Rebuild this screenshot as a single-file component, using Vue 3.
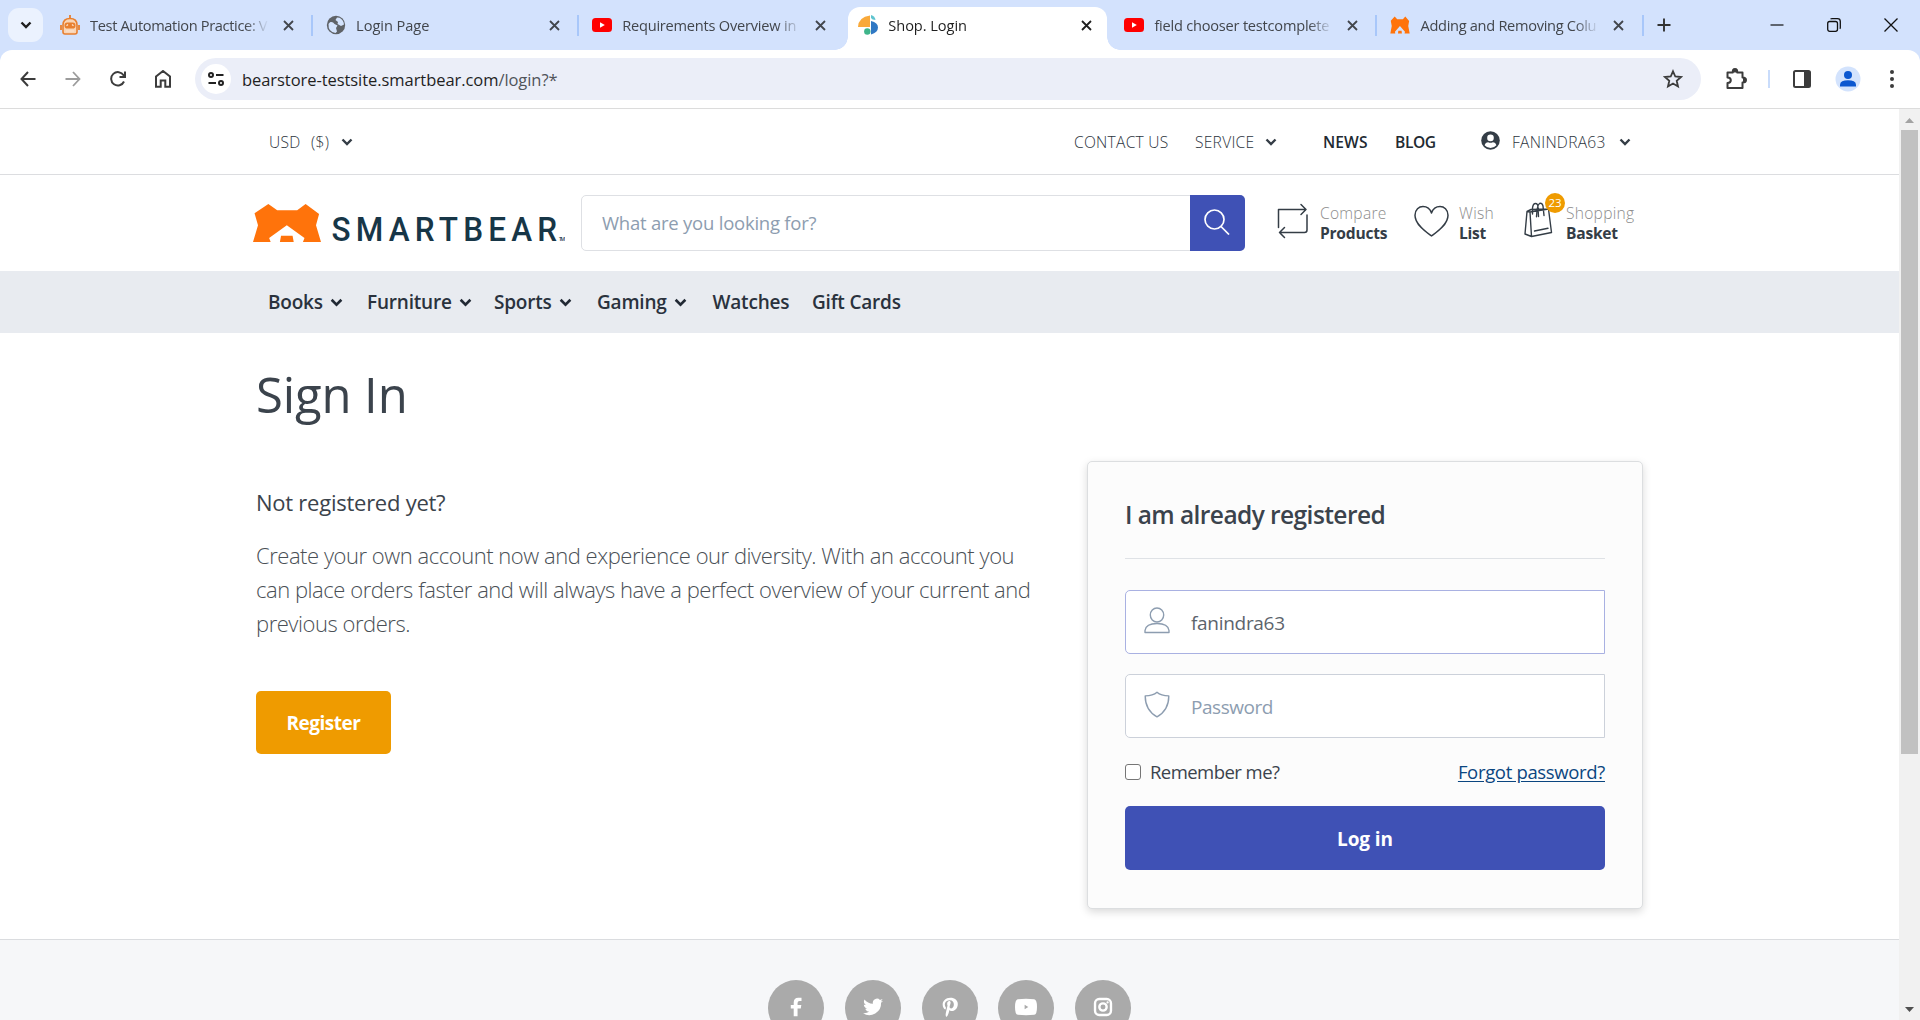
<script setup>
const tabs = [
  { icon: 'robot', title: 'Test Automation Practice: V', cls: 't1' },
  { icon: 'globe', title: 'Login Page', cls: 't2' },
  { icon: 'yt', title: 'Requirements Overview in', cls: 't3', noSep: true },
  { icon: 'shop', title: 'Shop. Login', cls: 't4', active: true, noSep: true },
  { icon: 'yt', title: 'field chooser testcomplete', cls: 't5' },
  { icon: 'bear', title: 'Adding and Removing Colu', cls: 't6' },
]
const nav = [
  { label: 'Books', drop: true, w: 99 },
  { label: 'Furniture', drop: true, w: 127 },
  { label: 'Sports', drop: true, w: 103 },
  { label: 'Gaming', drop: true, w: 115.5 },
  { label: 'Watches', w: 99.5 },
  { label: 'Gift Cards', w: 100 },
]
const bear = 'M75 282L98 301H150L172 282L207 312L199 346L212 396H165L169 384L123 346L77 384L81 396H35L48 346L39 310ZM108 377H138L141 396H105Z'
</script>

<template>
  <div class="window">
    <header class="tabstrip">
      <button class="tab-search">
        <svg width="12" height="8" viewBox="0 0 12 8"><path d="M1.5 1.5L6 6L10.5 1.5" fill="none" stroke="#1f1f1f" stroke-width="2.4" /></svg>
      </button>
      <div v-for="(t, i) in tabs" :key="i" class="tab" :class="[t.cls, { active: t.active, sep: !t.noSep }]">
        <svg v-if="t.icon === 'robot'" class="fav" viewBox="0 0 20 20">
          <path d="M10 0V4M1 10V15M19 10V15" stroke="#e87f2f" stroke-width="1.8" fill="none" />
          <path d="M3 17V10Q3 3.500 10 3.500T17 10V17Q17 19 15 19H5Q3 19 3 17Z" fill="#f9d5b6" stroke="#e87f2f" stroke-width="1.600" />
          <rect x="4.500" y="7.500" width="11" height="6" rx="2.800" fill="#e87f2f" />
          <path d="M6.500 10.800L8 9.500M12 9.500L13.500 10.800M6 16H14" stroke="#fbe3cf" stroke-width="1.200" />
        </svg>
        <svg v-else-if="t.icon === 'globe'" class="fav globe" viewBox="0 0 20 20">
          <circle cx="10" cy="10" r="9.200" fill="#5f6368" />
          <path d="M2.500 9C4 6 7 6.500 8.500 9L11.500 10.500L10 13L11 16.500L9.500 18Q2 17 2.500 9ZM11 2.500L9.500 5L12 7L11.500 9L15 11L18 9.500Q17.500 5 13.500 2.800Z" fill="#d3e3fd" />
        </svg>
        <svg v-else-if="t.icon === 'yt'" class="fav" viewBox="0 0 20 20">
          <rect y="3" width="20" height="14" rx="3.500" fill="#f00" /><path d="M8 7.300L12.800 10L8 12.700Z" fill="#fff" />
        </svg>
        <svg v-else-if="t.icon === 'shop'" class="fav" viewBox="0 0 20 20">
          <path d="M12 .500V12H0Q.500 2 12 .500Z" fill="#f9a93a" /><path d="M13 6Q20 7.500 20 12.500T13 19.500Z" fill="#2f78c4" />
          <path d="M13 0Q17 1 17.500 5Q14 5 13 3Z" fill="#5fc4cf" /><circle cx="9.300" cy="16.500" r="3.200" fill="#3fb58a" />
        </svg>
        <svg v-else class="fav" viewBox="32 272 183 134" preserveAspectRatio="none"><path :d="bear" fill="#ff730b" /></svg>
        <span class="tab-title">{{ t.title }}</span>
        <svg class="tab-close" width="11" height="11" viewBox="0 0 11 11"><path d="M1 1L10 10M10 1L1 10" stroke="currentColor" stroke-width="1.800" /></svg>
      </div>
      <svg class="plus" width="14" height="14" viewBox="0 0 14 14"><path d="M7 .500V13.500M.500 7H13.500" stroke="#333" stroke-width="1.900" /></svg>
      <div class="win-buttons">
        <svg width="14" height="14" viewBox="0 0 14 14"><path d="M.500 7H13.500" stroke="#111" stroke-width="1.200" /></svg>
        <svg width="14" height="14" viewBox="0 0 14 14" fill="none" stroke="#111" stroke-width="1.300"><rect x=".7" y="3.500" width="9.800" height="9.800" rx="2" /><path d="M3.500 1Q4 .7 5 .7H10.500Q13.300 .7 13.300 3.500V9.500Q13.300 10.300 12.800 10.800" /></svg>
        <svg width="14" height="14" viewBox="0 0 14 14"><path d="M.500 .500L13.500 13.500M13.500 .500L.500 13.500" stroke="#111" stroke-width="1.300" /></svg>
      </div>
    </header>

    <div class="toolbar">
      <div class="tools-left">
        <svg width="16" height="16" viewBox="0 0 16 16" fill="none" stroke="#3c3c3c" stroke-width="2"><path d="M15.500 8H1.500M8 1L1.500 8L8 15" /></svg>
        <svg width="16" height="16" viewBox="0 0 16 16" fill="none" stroke="#9c9c9c" stroke-width="1.800"><path d="M.500 8H14.500M8 1L14.500 8L8 15" /></svg>
        <svg width="16" height="16" viewBox="0 0 16 16" fill="none" stroke="#3c3c3c" stroke-width="2"><path d="M14 10.500A6.700 6.700 0 1 1 13.600 4.300L15 6M15 .500V6H9.500" /></svg>
        <svg width="16" height="18" viewBox="0 0 16 18" fill="none" stroke="#3c3c3c" stroke-width="2"><path d="M1 6.500L8 1L15 6.500V16.800H10.300V10.500H5.700V16.800H1Z" /></svg>
      </div>
      <div class="address">
        <span class="site-info"><svg width="16" height="14" viewBox="0 0 16 14" fill="none" stroke="#222" stroke-width="2"><circle cx="3" cy="3" r="2" /><path d="M8 3H15.500M.500 11H8" /><circle cx="13" cy="11" r="2" /></svg></span>
        <span class="url">bearstore-testsite.smartbear.com<i>/login?*</i></span>
        <svg class="star" width="20" height="20" viewBox="0 0 20 20" fill="none" stroke="#3c3c3c" stroke-width="1.800"><path d="M10 2.300L12.300 7.500L18 8L13.700 11.800L15 17.500L10 14.500L5 17.500L6.300 11.800L2 8L7.700 7.500Z" /></svg>
      </div>
      <div class="tools-right">
        <svg width="22" height="22" viewBox="0 0 22 22"><path d="M2.500 4.500H7.800Q7.500 1 10 1T12.200 4.500H17.500V9.500Q21 9.500 21 12T17.500 14.500V20H2.500V15Q5.800 14.700 5.800 12.200T2.500 9.500Z" fill="none" stroke="#3c3c3c" stroke-width="2" stroke-linejoin="round" /><path d="M8 3.500Q8 1 10 1T12 3.500V4.500H8ZM18 9.500Q21 9.800 21 12T18 14.500Z" fill="#3c3c3c" /></svg>
        <i class="tool-sep"></i>
        <svg width="20" height="20" viewBox="0 0 20 20"><rect x="2" y="2" width="16" height="16" rx="1.500" fill="none" stroke="#3c3c3c" stroke-width="2" /><path d="M12 2H18V18H12Z" fill="#3c3c3c" /></svg>
        <svg width="26" height="26" viewBox="0 0 26 26"><circle cx="13" cy="13" r="12.500" fill="#d3e3fd" /><circle cx="13" cy="9" r="4" fill="#0b57d0" /><path d="M5 20.500V18.500Q5.500 14.300 13 14.300T21 18.500V20.500Z" fill="#0b57d0" /></svg>
        <svg width="6" height="20" viewBox="0 0 6 20" fill="#3c3c3c"><circle cx="3" cy="3" r="2" /><circle cx="3" cy="10" r="2" /><circle cx="3" cy="17" r="2" /></svg>
      </div>
    </div>

    <div class="viewport">
      <div class="page">
        <div class="topbar">
          <span class="usd">USD</span><span class="dollar">($)</span>
          <svg class="chev" viewBox="0 0 12 8"><path d="M1.500 1.500L6 6L10.500 1.500" /></svg>
          <span class="contact">CONTACT US</span>
          <span class="service">SERVICE</span>
          <svg class="chev" viewBox="0 0 12 8"><path d="M1.500 1.500L6 6L10.500 1.500" /></svg>
          <span class="news">NEWS</span>
          <span class="blog">BLOG</span>
          <svg class="user" width="19" height="19" viewBox="0 0 19 19"><circle cx="9.500" cy="9.500" r="9.300" fill="#343d46" /><circle cx="9.500" cy="6.900" r="3.300" fill="#fff" /><path d="M3.600 14.300Q4.500 11.300 7.200 11.300Q9.500 12.300 11.800 11.300Q14.500 11.300 15.400 14.300Q13 17 9.500 17T3.600 14.300Z" fill="#fff" /></svg>
          <span class="account">FANINDRA63</span>
          <svg class="chev" viewBox="0 0 12 8"><path d="M1.500 1.500L6 6L10.500 1.500" /></svg>
        </div>

        <div class="shopbar">
          <svg class="logo" width="312" height="48" viewBox="0 0 312 48">
            <svg x="0" y="0" width="68" height="38" viewBox="35 282 177 114" preserveAspectRatio="none"><path :d="bear" fill="#ff730b" /></svg>
            <text class="brand" transform="translate(78.500 37) scale(.94 1)" textLength="240" lengthAdjust="spacing">SMARTBEAR</text>
            <text class="tm" x="306" y="37" textLength="6">TM</text>
          </svg>
          <div class="search">
            <span class="placeholder">What are you looking for?</span>
            <span class="search-btn"><svg width="26" height="26" viewBox="0 0 26 26" fill="none" stroke="#fff" stroke-width="1.700"><circle cx="10.500" cy="10.500" r="9.500" /><path d="M17 17.500L25 25.500" /></svg></span>
          </div>
          <div class="action compare">
            <svg width="32" height="36" viewBox="0 0 32 36" fill="none" stroke="#343d46" stroke-width="1.500" stroke-linecap="round" stroke-linejoin="round"><path d="M1.500 24.500V6.500H29M24 1.500L29 6.500L24 11.500M30 12V27Q30 29.500 27.500 29.500H2.500M7.500 24.500L2.500 29.500L7.500 34.500" /></svg>
            <p>Compare<b>Products</b></p>
          </div>
          <div class="action wish">
            <svg width="35" height="32" viewBox="0 0 35 32" fill="none" stroke="#343d46" stroke-width="1.500" stroke-linejoin="round"><path d="M17.500 31C12 27 1 19.500 1 10.200C1 4.500 5 1.500 9 1.500C13 1.500 16 3.700 17.500 8C19 3.700 22 1.500 26 1.500C30 1.500 34 4.500 34 10.200C34 19.500 23 27 17.500 31Z" /></svg>
            <p>Wish<b>List</b></p>
          </div>
          <div class="action basket">
            <svg width="29" height="36" viewBox="0 0 29 36" fill="none" stroke="#343d46" stroke-width="1.400" stroke-linejoin="round" stroke-linecap="round"><path d="M3 9.500L1 32L7.500 34.500L27.500 30.500L24.500 7L6 10L7.500 34.500M3 9.500L7 7.500L24.500 7M3 9.500L6 10M10.500 29L24 26.300M8.500 12V6Q9 1.500 11.500 1.500T14 5.500L14.500 14.500M12.500 14.800Q13 3 15.500 1.500Q18 .5 19 4L20 13.500" /></svg>
            <i class="badge">23</i>
            <p>Shopping<b>Basket</b></p>
          </div>
        </div>

        <nav class="nav">
          <span v-for="n in nav" :key="n.label" class="nav-item" :style="{ width: n.w + 'px' }">{{ n.label }}<svg v-if="n.drop" class="chev big" viewBox="0 0 12 8"><path d="M1.500 1.500L6 6L10.500 1.500" /></svg></span>
        </nav>

        <main class="content">
          <h1>Sign In</h1>
          <div class="columns">
            <section class="signup">
              <h2>Not registered yet?</h2>
              <p><span>Create your own account now and experience our diversity. With an account you</span> <span>can place orders faster and will always have a perfect overview of your current and</span> <span>previous orders.</span></p>
              <button class="register">Register</button>
            </section>
            <section class="card">
              <h3>I am already registered</h3>
              <div class="field focus">
                <svg width="26" height="27" viewBox="0 0 26 27" fill="none" stroke="#8d9db0" stroke-width="1.400" stroke-linejoin="round"><ellipse cx="13" cy="8" rx="6.700" ry="7" /><path d="M1 25.500V23.500Q2 16.500 13 16.500T25 23.500V25.500Z" /></svg>
                <span class="value">fanindra63</span>
              </div>
              <div class="field">
                <svg width="26" height="27" viewBox="0 0 26 27" fill="none" stroke="#8d9db0" stroke-width="1.400" stroke-linejoin="round"><path d="M13 1.200Q9 4.800 1.200 4.900C1.200 14 5.500 21.500 13 25.800C20.500 21.500 24.800 14 24.800 4.900Q17 4.800 13 1.200Z" /></svg>
                <span class="pw">Password</span>
              </div>
              <div class="row">
                <i class="check"></i><span class="remember">Remember me?</span><a class="forgot">Forgot password?</a>
              </div>
              <button class="login">Log in</button>
            </section>
          </div>
        </main>

        <footer class="footer">
          <span class="social"><svg viewBox="0 0 24 24"><path d="M9.500 22V13.500H6.300V9.800H9.500V7.200Q9.500 2 14.500 2H18V5.500H15.800Q13.700 5.500 13.700 7.500V9.800H17.800L17.200 13.500H13.700V22Z" /></svg></span>
          <span class="social"><svg viewBox="0 0 24 24"><path d="M23 5.100C22.200 5.500 21.300 5.700 20.400 5.800C21.400 5.300 22.100 4.400 22.400 3.300C21.500 3.800 20.600 4.200 19.600 4.400A4.500 4.500 0 0 0 11.900 8.500C8.200 8.300 4.900 6.500 2.700 3.800C1.500 5.800 2.100 8.400 4.100 9.800C3.400 9.800 2.700 9.600 2 9.200C2 11.300 3.500 13.200 5.600 13.700C5 13.900 4.300 13.900 3.600 13.800C4.200 15.600 5.800 16.900 7.800 16.900C5.900 18.400 3.600 19 1.100 18.700A12.800 12.800 0 0 0 20.800 7.300C21.700 6.700 22.400 6 23 5.100Z" /></svg></span>
          <span class="social"><svg viewBox="0 0 24 24"><path d="M12.400 2C7 2 4 5.700 4 9.500C4 11.500 5.100 13.900 6.700 14.600C7.200 14.800 7.200 14.500 7.600 12.900C7.600 12.600 7.500 12.500 7.300 12.200C5.300 9.500 6.500 4.700 11.800 4.700C17.700 4.700 17.200 13.500 13.300 13.500C12 13.500 11.300 12.500 11.600 11.400C12 9.900 12.700 8.300 12.700 7.200C12.700 4.500 8.900 4.900 8.900 8.500C8.900 9.600 9.300 10.300 9.300 10.300C7.100 20 6.800 20.100 8 23C10 21.500 11.200 16.800 11.300 15.200C11.700 15.900 12.800 16.400 13.900 16.400C17.800 16.400 20.500 12.800 20.500 8.700C20.500 4.800 17.300 2 12.400 2Z" /></svg></span>
          <span class="social"><svg viewBox="0 0 24 24"><path d="M3 3.500Q12 2.500 21 3.500Q24 4 24 12T21 20.500Q12 21.500 3 20.500Q0 20 0 12T3 3.500ZM10.500 9.500V14.500L14.500 12Z" /></svg></span>
          <span class="social"><svg class="outline" viewBox="0 0 24 24"><rect x="3.300" y="3.300" width="17.400" height="17.400" rx="4.500" /><circle cx="12" cy="12" r="4" /><circle cx="17" cy="7" r=".6" stroke-width="1.300" /></svg></span>
        </footer>
      </div>
      <div class="scrollbar">
        <svg width="9" height="5" viewBox="0 0 9 5"><path d="M0 5L4.500 0L9 5Z" fill="#a3a3a3" /></svg>
        <i class="thumb"></i>
        <svg width="9" height="5" viewBox="0 0 9 5"><path d="M0 0L4.500 5L9 0Z" fill="#505050" /></svg>
      </div>
    </div>
  </div>
</template>

<style>
body { margin: 0; overflow: hidden; }
</style>

<style scoped>
* { box-sizing: border-box; }
svg { display: block; flex: none; }
p, h1, h2, h3 { margin: 0; }
button { border: 0; padding: 0; font: inherit; }
i { font-style: normal; }
.window { width: 1920px; height: 1020px; overflow: hidden; display: flex; flex-direction: column; font-family: "Open Sans", "Noto Sans", sans-serif; color: #3b434c; white-space: nowrap; background: #fff; }

.tabstrip { height: 62px; margin-bottom: -12px; padding: 0 0 12px 8px; background: #d3e2fd; display: flex; align-items: center; flex: none; }
.tab-search { width: 35px; height: 34px; margin-right: 3px; border-radius: 11px; background: #ebf2fe; display: flex; align-items: center; justify-content: center; }
.tab { width: 266.100px; height: 50px; padding-left: 14px; display: flex; align-items: center; flex: none; position: relative; color: #42464c; font-size: 14.600px; }
.tab.sep::after { content: ""; position: absolute; right: -1px; top: 15px; width: 2px; height: 21px; background: #a8c7fa; }
.tab.active { color: #1f1f1f; }
.tab.active::before { content: ""; position: absolute; left: 4px; right: 3px; top: 7px; bottom: 0; background: #fff; border-radius: 12px 12px 0 0; }
.tab.active::after { content: ""; position: absolute; left: -9px; right: -10px; bottom: 0; height: 13px; background: radial-gradient(circle at 0 0, transparent 12.500px, #fff 13px) left / 13px 13px no-repeat, radial-gradient(circle at 100% 0, transparent 12.500px, #fff 13px) right / 13px 13px no-repeat; }
.tab > * { position: relative; z-index: 1; }
.fav { width: 20px; height: 20px; }
.tab-title { width: 179px; margin-left: 10px; line-height: 22px; letter-spacing: -.22px; -webkit-mask-image: linear-gradient(90deg, #000 155px, transparent 179px); mask-image: linear-gradient(90deg, #000 155px, transparent 179px); }
.t1 .tab-title { letter-spacing: -.35px; }
.t6 .tab-title { letter-spacing: -.3px; }
.t2 .tab-title, .t4 .tab-title { letter-spacing: -.05px; }
.tab-close { margin-left: 14px; }
.plus { margin-left: 14px; }
.win-buttons { margin-left: auto; margin-right: 22px; display: flex; gap: 43px; }

.toolbar { height: 59px; flex: none; position: relative; background: #fff; border-bottom: 1px solid #dcdcdc; border-radius: 12px 12px 0 0; display: flex; align-items: center; padding-left: 20px; }
.tools-left { display: flex; align-items: center; gap: 29px; width: 175px; }
.address { width: 1506px; height: 42px; border-radius: 21px; background: #ebeef8; display: flex; align-items: center; padding: 0 18px 0 6px; }
.site-info { width: 30px; height: 30px; border-radius: 50%; background: #fff; display: flex; align-items: center; justify-content: center; }
.url { margin-left: 11px; font-size: 16.500px; letter-spacing: -.06px; color: #1f1f1f; flex: 1; }
.url i { color: #50545a; }
.tools-right { display: flex; align-items: center; flex: 1; padding-left: 24px; }
.tool-sep { width: 2px; height: 18px; background: #c9dcfb; margin: 0 22px 0 21px; }
.tools-right svg:nth-of-type(3) { margin: 0 28px 0 23px; }

.viewport { flex: 1; display: flex; min-height: 0; }
.page { width: 1899px; display: flex; flex-direction: column; overflow: hidden; }
.scrollbar { width: 21px; background: #f1f1f1; display: flex; flex-direction: column; align-items: center; padding: 9px 0 8px; }
.thumb { width: 17px; height: 624px; background: #c1c1c1; margin: 7px 0 auto; }

.topbar { height: 66px; border-bottom: 1px solid #dcdde0; display: flex; align-items: center; padding-left: 269px; font-size: 15.600px; font-weight: 350; flex: none; letter-spacing: .25px; color: #2c343d; }
.chev { width: 12px; height: 8px; fill: none; stroke: #343d46; stroke-width: 2.400; }
.usd { width: 42px; } .dollar { width: 30px; }
.contact { margin-left: 721px; width: 121px; }
.service { width: 70px; }
.news { margin-left: 46px; width: 72px; font-weight: 550; color: #222a32; letter-spacing: .1px; }
.blog { width: 86px; font-weight: 550; color: #222a32; letter-spacing: -.4px; }
.user { margin-right: 12px; margin-top: -2px; }
.account { width: 107px; }

.shopbar { height: 96px; display: flex; padding-left: 253px; flex: none; }
.logo { margin: 29px 16px 0 0; }
.brand { font-family: Roboto, sans-serif; font-weight: 500; font-size: 33.500px; fill: #173647; }
.tm { font-size: 5px; font-weight: 600; fill: #173647; }
.search { width: 664px; height: 56px; margin-top: 20px; border: 1px solid #dee0e4; border-radius: 5px; display: flex; align-items: center; padding-left: 20px; }
.placeholder { flex: 1; font-size: 18.500px; letter-spacing: -.23px; color: #8d9db0; padding-bottom: 2px; }
.search-btn { width: 55px; height: 56px; margin-right: -1px; background: #3f51b5; border-radius: 0 5px 5px 0; display: flex; align-items: center; justify-content: center; flex: none; padding: 0 2px 2px 0; }
.action { display: flex; position: relative; font-size: 15.600px; line-height: 20px; letter-spacing: .25px; color: #8c8c8c; font-weight: 350; }
.action p { margin-top: 28px; }
.action p b { display: block; font-weight: 700; color: #343d46; letter-spacing: -.25px; }
.compare { margin-left: 32px; width: 137px; } .compare svg { margin: 28px 11px 0 0; }
.wish { width: 110px; } .wish svg { margin: 30px 10px 0 0; }
.basket svg { margin: 27px 13px 0 0; }
.badge { position: absolute; left: 21px; top: 18px; width: 20px; height: 20px; border-radius: 50%; background: #ef9b00; color: #fff; font-size: 11.500px; line-height: 20px; text-align: center; font-weight: 400; letter-spacing: 0; }

.nav { height: 62px; background: #e8ebf0; display: flex; align-items: center; padding-left: 268px; font-size: 19px; font-weight: 600; letter-spacing: -.2px; color: #2a323d; flex: none; }
.nav-item { display: flex; align-items: center; flex: none; line-height: 28px; }
.big { width: 13px; height: 9px; margin: 1px 0 0 7px; stroke: #212934; }

.content { height: 606px; padding: 0 256px; flex: none; }
h1 { height: 128px; padding-top: 29px; font-size: 49px; line-height: 64px; font-weight: 400; letter-spacing: -.1px; }
.columns { display: flex; justify-content: space-between; }
.signup { padding-top: 26px; }
h2 { font-size: 22px; line-height: 30px; font-weight: 400; letter-spacing: -.25px; }
.signup p { margin-top: 21px; font-size: 22px; line-height: 34px; font-weight: 300; letter-spacing: -.46px; color: #4a5056; }
.signup p span { display: block; }
.register { width: 135px; height: 63px; margin-top: 51px; border-radius: 5px; background: #ef9b00; color: #fff; font-size: 19px; font-weight: 700; letter-spacing: -.5px; }
.card { width: 556px; height: 448px; padding: 0 37px; border: 1px solid #dcdee0; border-radius: 5px; background: #fcfcfc; box-shadow: 0 3px 8px rgba(0, 0, 0, .15); }
h3 { height: 97px; padding-top: 34px; border-bottom: 1px solid #dfe2e6; margin-bottom: 31px; font-size: 24.500px; line-height: 38px; font-weight: 550; letter-spacing: -.57px; }
.field { height: 64px; margin-bottom: 20px; border: 1px solid #ccd1da; border-radius: 5px 0 0 5px; background: #fff; display: flex; align-items: center; padding-left: 18px; font-size: 19px; color: #8d9db0; letter-spacing: -.3px; }
.field.focus { border-color: #a9b1e2; }
.field svg { margin: -4px 21px 0 0; }
.field span { padding-top: 2px; }
.value { color: #5c646c; }
.pw { letter-spacing: -.45px; }
.row { height: 48px; display: flex; align-items: center; margin-top: -10px; font-size: 18.500px; letter-spacing: -.33px; }
.remember { letter-spacing: -.55px; padding-bottom: 2px; }
.check { width: 16px; height: 16px; border: 1.500px solid #767676; border-radius: 3px; background: #fff; margin-right: 9px; }
.forgot { margin-left: auto; padding-bottom: 2px; color: #0b4680; text-decoration: underline; text-underline-offset: 2px; }
.login { width: 100%; height: 64px; margin-top: 10px; padding-top: 2px; background: #3f51b5; color: #fff; border-radius: 5px; font-size: 19px; font-weight: 700; letter-spacing: -.1px; }

.footer { flex: 1; border-top: 1px solid #dadcdf; background: #f6f7f9; display: flex; gap: 20.750px; padding: 40px 0 0 768px; }
.social { width: 56px; height: 56px; border-radius: 50%; background: #aaa; display: flex; align-items: center; justify-content: center; flex: none; }
.social svg { width: 22px; height: 22px; fill: #fff; margin-top: -2px; }
.social .outline { fill: none; stroke: #fff; stroke-width: 2.600; }
</style>
